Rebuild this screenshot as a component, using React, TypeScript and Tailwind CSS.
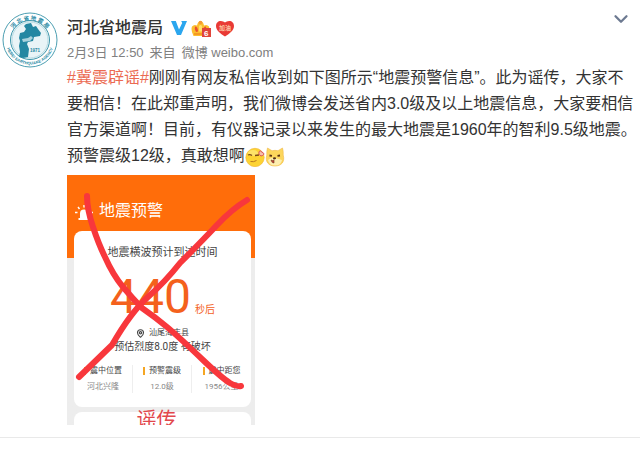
import React from "react";
import { ChevronDown, MapPin } from "lucide-react";

const stats = [
  { label: "震中位置", value: "河北兴隆" },
  { label: "预警震级", value: "12.0级" },
  { label: "震中距您", value: "1956公里" },
];

const Avatar = () => (
  <svg viewBox="0 0 56 56" className="size-14" role="img" aria-label="河北省地震局">
    <defs>
      <path id="ringTop" d="M8 33 A20.500 20.500 0 1 1 48 33" />
      <path id="ringBottom" d="M4 33 A24.500 24.500 0 0 0 52 33" />
    </defs>
    <circle cx="28" cy="28" r="27" fill="#fff" stroke="#4d9fb2" strokeWidth="1" />
    <circle cx="28" cy="28" r="19.500" fill="#e9f4f7" stroke="#3d96ab" strokeWidth="1" />
    <circle cx="28" cy="28" r="18" fill="none" stroke="#b9dbe3" strokeWidth="1" />
    <path
      d="M24 12l5-1 2 4 3-1 2 3 3 4-1 3-6 1-1 4-5 1-1 2 2 5-1 8-5 1-4-1 1-5-1-6 1-5-1-3 1-5 4-1 2-3-2-3z"
      fill="#2487a2"
    />
    <path d="M20 27l6-1 3-2 2 2-3 3-7 1z" fill="#a9d2dc" />
    <text x="28" y="40" fontSize="4.500" fontWeight="700" fill="#2487a2" className="font-['Liberation_Sans',sans-serif]">
      1971
    </text>
    <text fontSize="5.500" fontWeight="700" fill="#2487a2" className="font-['Noto_Sans_CJK_SC',sans-serif]">
      <textPath href="#ringTop" startOffset="50%" textAnchor="middle">
        河 北 省 地 震 局
      </textPath>
    </text>
    <text fontSize="4" fontWeight="700" fill="#2487a2" className="font-['Liberation_Sans',sans-serif]">
      <textPath href="#ringBottom" startOffset="50%" textAnchor="middle">
        HEBEI EARTHQUAKE AGENCY
      </textPath>
    </text>
  </svg>
);

const VerifiedIcon = () => (
  <svg viewBox="0 0 16 14" className="h-3.5 w-4">
    <path d="M0 0h4.800L8 8.500 11.200 2 10.200 0H16L10 14H6z" fill="#2ba6ee" />
  </svg>
);

const CrownIcon = () => (
  <svg viewBox="0 0 20 17" className="h-[17px] w-5">
    <path d="M2.500 16Q-.500 10 1 6.500 3 4 6 5.500 7 1 9.500 1T13 5.500q3-1.500 5 1 1 4-2 9.500z" fill="#fcbd2f" />
    <circle cx="9.500" cy="2.500" r="1.800" fill="#f39a35" />
    <path d="M4 6.500q3 0 3 5l-2 .5Q3 9 4 6.500zM15 6.500q-3 0-3 5l2 .5q2-3 1-5.500z" fill="#e9502f" />
    <path d="M8 6q1.500-2 3 0v5.500H8z" fill="#ffe06c" />
    <path d="M3 13h13v2H3z" fill="#f59a22" />
    <rect x="11" y="8" width="9" height="9" fill="#e0443a" />
    <text x="13" y="15.500" fontSize="8" fontWeight="700" fill="#fff" className="font-['Liberation_Sans',sans-serif]">
      6
    </text>
  </svg>
);

const HeartIcon = () => (
  <svg viewBox="0 0 20 17" className="h-[17px] w-5">
    <path
      d="M10 16.500C6 14 1 10.500 1 6 1 3 3 1 5.800 1 7.600 1 9 1.800 10 2.500c1-.700 2.400-1.500 4.200-1.500C17 1 19 3 19 6c0 4.500-5 8-9 10.500z"
      fill="#e93a35"
    />
    <text x="10" y="9.500" fontSize="6" fontWeight="700" textAnchor="middle" fill="#fbc7a4" className="font-['Noto_Sans_CJK_SC',sans-serif]">
      加油
    </text>
  </svg>
);

const ThinkingEmoji = () => (
  <svg viewBox="0 0 20 20" className="inline-block size-5 align-middle">
    <circle cx="10" cy="10.500" r="9.200" fill="#fdd333" stroke="#efb32f" strokeWidth=".6" />
    <ellipse cx="8" cy="6" rx="5" ry="3" fill="#fee368" />
    <path d="M3 8q2-1 4 .500M10 8.500l4-.500" stroke="#7c4a17" strokeWidth="1.300" fill="none" />
    <path d="M5.500 14.500q3 .800 6-1" stroke="#b9771f" strokeWidth="1" fill="none" />
    <path d="M14 5.500c0-2 2.500-2 3 0 2 0 2.500 2 .5 3-1.500 1-4-.500-3.500-3z" fill="#f7c0a8" stroke="#d8485a" strokeWidth="1" />
  </svg>
);

const DogeEmoji = () => (
  <svg viewBox="0 0 20 20" className="inline-block size-5 align-middle">
    <path
      d="M2.500 1L7 3.700q3-.700 6 0L17.500 1q1 3.500.700 7c2 7-2 11-8.200 11s-10.200-4-8.200-11q-.300-3.500.7-7z"
      fill="#fcd65c"
      stroke="#f0b848"
      strokeWidth=".6"
    />
    <path d="M3 13q3-3 7-2t7 2q-1 5.500-7 5.500T3 13z" fill="#fdeeb0" />
    <path d="M4.500 8.500l2.500.300M12.500 8.800l2.500-.3" stroke="#5b3216" strokeWidth="1.800" />
    <ellipse cx="9.500" cy="11.300" rx="1.600" ry="1.100" fill="#4d2c18" />
    <path d="M6 13q1.500 1 3 0v3q-2 .500-3-3z" fill="#c9433a" stroke="#6b3217" strokeWidth=".6" />
  </svg>
);

const AlarmIcon = () => (
  <svg viewBox="0 0 18 16" className="h-4 w-[18px]">
    <path d="M5 13V8.500a4 4 0 0 1 8 0V13h1.500v2h-11v-2z" fill="#fff" />
    <path d="M9 0v2.500M3 2l1.500 2M15 2l-1.500 2M0 7.500h2.500M15.500 7.500H18" stroke="#fff" strokeWidth="1.400" />
  </svg>
);

const CrossOut = () => (
  <svg viewBox="0 0 188 250" className="absolute inset-0 size-full" aria-hidden="true">
    <g fill="none" stroke="#f8373c" strokeWidth="6" strokeLinecap="round" strokeLinejoin="round">
      <path d="M20 21Q20 34 26 52T38 82Q46 100 56 112T75 133Q88 142 100 152T136 185Q156 204 163 208T174 211" />
      <path d="M180 25Q165 34 150 50T113 88Q98 107 81 122T45 170L12 202" />
    </g>
  </svg>
);

const WarningPhoto = () => (
  <div className="relative flex h-[250px] w-[188px] flex-col overflow-hidden bg-linear-to-b from-[#ff6d0a] from-[83px] to-[#ededed] to-[83px] font-['Roboto','Noto_Sans_CJK_SC',sans-serif]">
    <div className="flex h-14 shrink-0 items-end gap-1.5 px-2 pb-2.5 text-base leading-5 text-white">
      <AlarmIcon />
      <span>地震预警</span>
    </div>
    <div className="ml-[7px] mr-1 flex h-[176px] shrink-0 flex-col items-center rounded-lg bg-white pt-3.5 text-[#444]">
      <p className="text-[11px] leading-4">地震横波预计到达时间</p>
      <div className="mt-3 flex items-baseline gap-1 text-[#f4611c]">
        <span className="text-5xl">440</span>
        <span className="text-[10px] leading-4">秒后</span>
      </div>
      <div className="mt-1.5 flex items-center gap-1 text-[8px] leading-3">
        <MapPin size={9} strokeWidth={3} />
        <span>汕尾海丰县</span>
      </div>
      <p className="text-[10px] leading-4">预估烈度8.0度 有破坏</p>
      <dl className="mt-2.5 grid w-full grid-cols-3 divide-x divide-[#eee] text-[8px]">
        {stats.map((stat) => (
          <div key={stat.label} className="flex flex-col items-center gap-1">
            <dt className="flex items-center gap-1 leading-3">
              <span className="h-2 w-0.5 bg-[#f5a623]" />
              {stat.label}
            </dt>
            <dd className="leading-3 text-[#888]">{stat.value}</dd>
          </div>
        ))}
      </dl>
    </div>
    <div className="ml-[7px] mr-1 mt-[5px] h-5 shrink-0 rounded-t-lg bg-white pr-3 text-center font-['Liberation_Serif','Noto_Sans_CJK_SC',serif] text-xl leading-4 text-[#e2474c]">
      谣传
    </div>
    <CrossOut />
  </div>
);

const App = () => {
  return (
    <article className="flex gap-[9px] border-b border-[#e9e9e9] bg-white pb-3 pl-0.5 pt-3 font-['Liberation_Sans','Noto_Sans_CJK_SC',sans-serif]">
      <a href="#profile" className="shrink-0 self-start">
        <Avatar />
      </a>
      <div className="min-w-0 flex-1 pt-1">
        <header className="flex items-start justify-between pr-2">
          <div>
            <div className="flex h-6 items-center gap-1">
              <a href="#profile" className="mr-1 text-base font-medium leading-6 text-[#333]">
                河北省地震局
              </a>
              <VerifiedIcon />
              <CrownIcon />
              <HeartIcon />
            </div>
            <div className="flex h-[25px] items-center gap-1.5 text-[13px] text-[#808080]">
              <time>2月3日 12:50</time>
              <span>来自</span>
              <a href="#source">微博 weibo.com</a>
            </div>
          </div>
          <button type="button" aria-label="更多" className="-mt-2 text-[#6d7a91]">
            <ChevronDown size={22} strokeWidth={2.5} />
          </button>
        </header>
        <p className="whitespace-nowrap text-base leading-[26px] text-[#333]">
          <a href="#topic" className="text-[#eb6a51]">
            #冀震辟谣#
          </a>
          刚刚有网友私信收到如下图所示“地震预警信息”。此为谣传，大家不
          <br />
          要相信！在此郑重声明，我们微博会发送省内3.0级及以上地震信息，大家要相信
          <br />
          官方渠道啊！目前，有仪器记录以来发生的最大地震是1960年的智利9.5级地震。
          <br />
          预警震级12级，真敢想啊
          <ThinkingEmoji />
          <DogeEmoji />
        </p>
        <div className="mt-1.5">
          <WarningPhoto />
        </div>
      </div>
    </article>
  );
};

export default App;
